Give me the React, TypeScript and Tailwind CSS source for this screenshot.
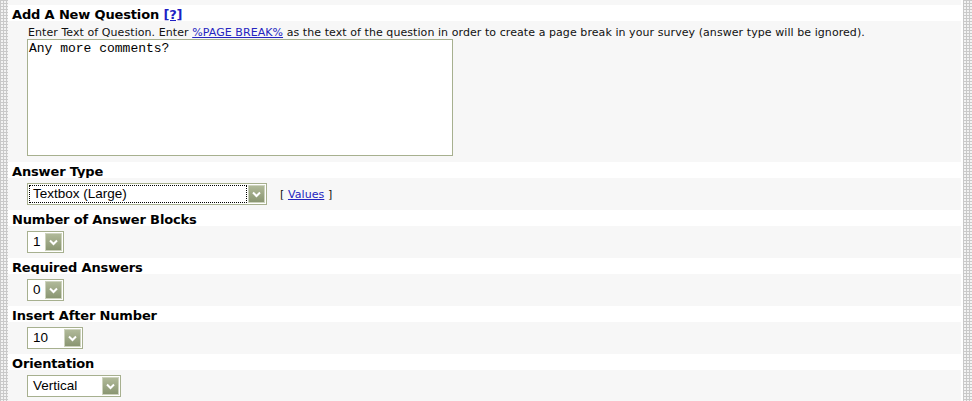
import React from 'react';

// checkered frame strip used on both page edges
const edge =
  'bg-[linear-gradient(90deg,#c9c9c9_1px,transparent_1px),linear-gradient(#c9c9c9_1px,#f3f3f3_1px)] bg-[length:3px_3px]';

const Chevron = () => (
  <svg width="9" height="7" viewBox="0 0 9 7" className="block">
    <path d="M1 1.5 L4.5 5 L8 1.5" fill="none" stroke="#ffffff" strokeWidth="2" />
  </svg>
);

interface SelectProps {
  value: string;
  className: string;
  focused?: boolean;
}

const FakeSelect: React.FC<SelectProps> = ({ value, className, focused }) => (
  <div className={`flex h-[22px] items-center border border-[#a7b08f] bg-white ${className}`}>
    {focused ? (
      <div className="ml-[1px] flex h-[18px] flex-1 items-center border border-dotted border-black pl-[3px] text-[13.5px] leading-none text-black">
        {value}
      </div>
    ) : (
      <div className="flex-1 pl-[5px] text-[13.5px] leading-none text-black">{value}</div>
    )}
    <div className="ml-[1px] mr-[1px] flex h-[18px] w-[17px] shrink-0 items-center justify-center border border-[#cdd3bd] bg-gradient-to-b from-[#b0b999] to-[#8a9672]">
      <Chevron />
    </div>
  </div>
);

const Label: React.FC<{ children: React.ReactNode }> = ({ children }) => (
  <div className="h-4 bg-white pl-[4px] text-[13px] font-bold leading-[19px] tracking-[-0.15px] text-black">
    {children}
  </div>
);

const Field: React.FC<{ children: React.ReactNode }> = ({ children }) => (
  <div className="flex h-8 items-center bg-[#f7f7f7] pl-[19px]">{children}</div>
);

export default function App() {
  return (
    <div className="flex h-[401px] w-[972px] overflow-hidden bg-white font-['DejaVu_Sans',Verdana,sans-serif]">
      <div className={`w-[8px] shrink-0 ${edge}`} />

      <div className="flex w-[953px] shrink-0 flex-col">
        <div className="h-[5px] bg-[#f7f7f7]" />

        <Label>
          Add A New Question{' '}
          <a href="#" className="text-[#1f1fc4] underline">
            [?]
          </a>
        </Label>

        <div className="h-[141px] bg-[#f7f7f7] pl-[19px] pt-[5px]">
          <div className="pl-[1px] text-[11px] leading-[13px] tracking-[0.07px] text-[#111]">
            Enter Text of Question. Enter{' '}
            <a href="#" className="text-[#2424c0] underline">
              %PAGE BREAK%
            </a>{' '}
            as the text of the question in order to create a page break in your survey (answer type will be
            ignored).
          </div>
          <textarea
            defaultValue="Any more comments?"
            className="block h-[117px] w-[426px] resize-none border border-[#a7b08f] bg-white pl-[1px] pt-[1px] font-['Liberation_Mono',monospace] text-[13px] leading-[15px] text-black outline-none"
          />
        </div>

        <Label>Answer Type</Label>
        <Field>
          <div className="flex items-center font-['Liberation_Sans',Arial,sans-serif]">
            <FakeSelect value="Textbox (Large)" className="w-[240px]" focused />
          </div>
          <span className="ml-[13px] mt-[2px] text-[11px] tracking-[0.07px] text-[#111]">
            [{' '}
            <a href="#" className="text-[#2424c0] underline">
              Values
            </a>{' '}
            ]
          </span>
        </Field>

        <Label>Number of Answer Blocks</Label>
        <Field>
          <div className="font-['Liberation_Sans',Arial,sans-serif]">
            <FakeSelect value="1" className="w-[37px]" />
          </div>
        </Field>

        <Label>Required Answers</Label>
        <Field>
          <div className="font-['Liberation_Sans',Arial,sans-serif]">
            <FakeSelect value="0" className="w-[37px]" />
          </div>
        </Field>

        <Label>Insert After Number</Label>
        <Field>
          <div className="font-['Liberation_Sans',Arial,sans-serif]">
            <FakeSelect value="10" className="w-[56px]" />
          </div>
        </Field>

        <Label>Orientation</Label>
        <div className="flex-1 bg-[#f7f7f7] pl-[19px] pt-[5px]">
          <div className="font-['Liberation_Sans',Arial,sans-serif]">
            <FakeSelect value="Vertical" className="w-[94px]" />
          </div>
        </div>
      </div>

      <div className="w-[2px] shrink-0 bg-white" />
      <div className={`w-[9px] shrink-0 ${edge}`} />
    </div>
  );
}
